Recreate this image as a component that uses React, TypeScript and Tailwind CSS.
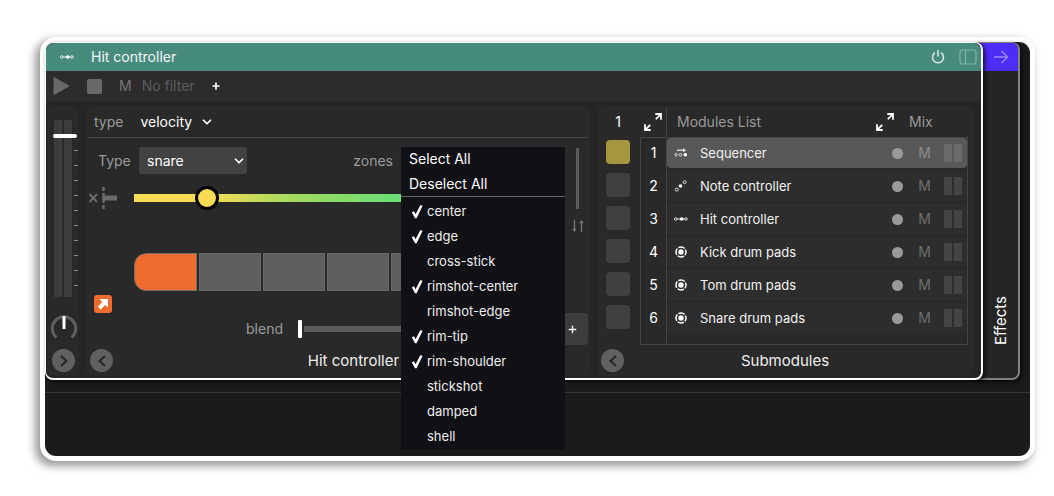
import { useState } from 'react';
import { ChevronDown, Plus } from 'lucide-react';

const ZONES = [
  'center',
  'edge',
  'cross-stick',
  'rimshot-center',
  'rimshot-edge',
  'rim-tip',
  'rim-shoulder',
  'stickshot',
  'damped',
  'shell',
];

const MODULES = [
  { name: 'Sequencer', icon: 'sequencer' },
  { name: 'Note controller', icon: 'note' },
  { name: 'Hit controller', icon: 'hit' },
  { name: 'Kick drum pads', icon: 'pads' },
  { name: 'Tom drum pads', icon: 'pads' },
  { name: 'Snare drum pads', icon: 'pads' },
];

function ModuleIcon({ kind }: { kind: string }) {
  return (
    <svg width="16" height="16" viewBox="0 0 16 16" fill="none" stroke="#fff" className="shrink-0">
      {kind === 'sequencer' && (
        <>
          <path d="M4 5.200h7" strokeWidth="1.1" />
          <path d="M10 3.200 13 5.200l-3 2z" fill="#fff" stroke="none" />
          <circle cx="3" cy="9.800" r="1.3" strokeWidth="0.7" />
          <circle cx="7.500" cy="9.800" r="1.3" strokeWidth="0.7" />
          <circle cx="12.300" cy="9.800" r="1.800" fill="#fff" stroke="none" />
        </>
      )}
      {kind === 'note' && (
        <>
          <circle cx="3.800" cy="11.600" r="1.500" strokeWidth="0.8" />
          <circle cx="7.500" cy="8" r="1.800" fill="#fff" stroke="none" />
          <circle cx="11.600" cy="4.200" r="1.500" strokeWidth="0.8" />
        </>
      )}
      {kind === 'hit' && (
        <>
          <path d="M4 8h7.500" strokeWidth="0.9" />
          <circle cx="2.700" cy="8" r="1.300" strokeWidth="0.8" />
          <circle cx="8.700" cy="8" r="1.800" fill="#fff" stroke="none" />
          <circle cx="12.900" cy="8" r="1.300" strokeWidth="0.8" />
        </>
      )}
      {kind === 'pads' && (
        <>
          <circle cx="8" cy="8" r="2.700" fill="#fff" stroke="none" />
          <circle cx="8" cy="8" r="5" strokeWidth="1.500" strokeDasharray="6.650 1.200" strokeDashoffset="3.300" />
        </>
      )}
    </svg>
  );
}

function ExpandIcon() {
  return (
    <svg width="18" height="18" viewBox="0 0 18 18" fill="none" stroke="#fff" strokeWidth="1.800">
      <path d="M11.300 1H17v5.700M16.600 1.400l-4.800 4.800" />
      <path d="M1 11.300V17h5.700M1.400 16.600l4.800-4.800" />
    </svg>
  );
}

function RoundButton({ label, flip }: { label: string; flip?: boolean }) {
  return (
    <button type="button" aria-label={label} className="flex size-[23px] items-center justify-center rounded-full bg-[#606060]">
      <svg width="12" height="14" viewBox="0 0 12 14" fill="none" stroke="#262626" strokeWidth="2">
        <path d={flip ? 'M3 2l5.500 5L3 12' : 'M9 2 3.500 7 9 12'} />
      </svg>
    </button>
  );
}

function ChannelStrip() {
  return (
    <section className="flex w-[31px] shrink-0 flex-col rounded-md bg-[#292929] pt-[14px]">
      <div className="relative flex h-[177px] gap-[2px] pl-[6px]">
        <div className="w-2 bg-[#3c3c3c]" />
        <div className="w-2 bg-[#3c3c3c]" />
        <div className="flex flex-col gap-[14px] pt-[30px]">
          {Array.from({ length: 10 }, (_, i) => (
            <div key={i} className="h-px w-1 bg-[#8a8a8a]" />
          ))}
        </div>
        <input
          type="range"
          aria-label="Volume"
          defaultValue={92}
          className="absolute inset-y-0 left-1 h-full w-[26px] appearance-none bg-transparent [direction:rtl] [writing-mode:vertical-lr] [&::-webkit-slider-thumb]:h-1 [&::-webkit-slider-thumb]:w-[24px] [&::-webkit-slider-thumb]:appearance-none [&::-webkit-slider-thumb]:rounded-full [&::-webkit-slider-thumb]:bg-white"
        />
      </div>
      <div className="flex flex-1 items-end justify-center">
        <svg width="28" height="28" viewBox="0 0 28 28" fill="none" className="mb-[2px]">
          <path d="M6.500 22.500A11.700 11.700 0 1 1 21.500 22.500" stroke="#606060" strokeWidth="3" />
          <path d="M14 1v13" stroke="#fff" strokeWidth="3" />
        </svg>
      </div>
      <div className="flex h-[31px] items-center justify-center">
        <RoundButton label="Expand strip" flip />
      </div>
    </section>
  );
}

function ZonesMenu() {
  const [checked, setChecked] = useState<string[]>(['center', 'edge', 'rimshot-center', 'rim-tip', 'rim-shoulder']);

  function toggle(zone: string) {
    setChecked((prev) => (prev.includes(zone) ? prev.filter((z) => z !== zone) : [...prev, zone]));
  }

  return (
    <div className="absolute top-0 left-0 z-20 w-full bg-[#111014] pb-px text-white">
      <div className="mb-[2px] flex h-[50px] flex-col border-b border-[#626264]">
        <button type="button" onClick={() => setChecked(ZONES)} className="h-[25px] px-2 text-left">
          Select All
        </button>
        <button type="button" onClick={() => setChecked([])} className="h-[25px] px-2 text-left">
          Deselect All
        </button>
      </div>
      {ZONES.map((zone) => (
        <label key={zone} className="flex h-[25px] items-center gap-1 pl-[10px] text-[13px] text-[#eeeeee]">
          <input type="checkbox" checked={checked.includes(zone)} onChange={() => toggle(zone)} className="peer sr-only" />
          <svg width="12" height="14" viewBox="0 0 12 14" className="invisible peer-checked:visible">
            <path d="M.8 7.300 3 6.200l1.600 3L9.300.2l2.300.6L5.600 13.200H4z" fill="#fff" />
          </svg>
          {zone}
        </label>
      ))}
    </div>
  );
}

function HitControllerCard() {
  return (
    <section className="flex min-w-0 flex-1 flex-col rounded-md bg-[#292929]">
      <div className="mx-[2px] flex h-8 items-center gap-[17px] border-b border-[#444444] pl-[6px]">
        <label htmlFor="source" className="text-[#9a9a9a]">type</label>
        <div className="relative flex items-center">
          <select id="source" className="appearance-none bg-transparent pr-[22px] text-white">
            <option>velocity</option>
          </select>
          <ChevronDown size={14} strokeWidth={3} className="pointer-events-none absolute right-0 text-white" />
        </div>
      </div>

      <div className="flex">
        <div className="flex min-w-0 flex-1 flex-col">
          <div className="mt-[9px] flex h-[27px] items-center gap-2 pl-3">
            <label htmlFor="drum" className="w-[33px] text-[#9a9a9a]">Type</label>
            <div className="relative flex w-[108px] items-center">
              <select id="drum" className="h-[27px] w-full appearance-none rounded-[3px] bg-[#424242] pl-2 text-white">
                <option>snare</option>
              </select>
              <ChevronDown size={14} strokeWidth={3} className="pointer-events-none absolute right-px text-white" />
            </div>
            <span className="ml-auto text-[#9a9a9a]">zones</span>
            <div className="relative h-full w-[164px] bg-[#424242]">
              <ZonesMenu />
            </div>
          </div>

          <div className="mt-3 flex h-6 items-center">
            <div className="w-12 shrink-0 pl-[2px]">
              <svg width="30" height="24" viewBox="0 0 30 24" fill="none" stroke="#6c6c6c">
                <path d="M1.500 8l7.500 8M9 8l-7.500 8" strokeWidth="2" />
                <path d="M15.500 1v4M15.500 7v10M15.500 19v4" strokeWidth="2.400" />
                <path d="M15.500 12H29" strokeWidth="5" />
              </svg>
            </div>
            <input
              type="range"
              aria-label="Threshold"
              max={1000}
              defaultValue={149}
              className="h-6 min-w-0 flex-1 appearance-none bg-transparent [&::-webkit-slider-runnable-track]:h-2 [&::-webkit-slider-runnable-track]:bg-[linear-gradient(90deg,#f8dc53_17%,#9edb5f_38%,#6cdd77_60%)] [&::-webkit-slider-thumb]:-mt-2 [&::-webkit-slider-thumb]:size-6 [&::-webkit-slider-thumb]:appearance-none [&::-webkit-slider-thumb]:rounded-full [&::-webkit-slider-thumb]:border-[3px] [&::-webkit-slider-thumb]:border-black [&::-webkit-slider-thumb]:bg-[#f8dc53]"
            />
          </div>

          <div className="mt-[43px] flex h-[60px] items-start">
            <div className="flex h-full w-12 shrink-0 items-end pl-2">
              <button type="button" aria-label="Output" className="flex size-[18px] items-center justify-center rounded-[3px] bg-[#ef6c2e]">
                <svg width="12" height="12" viewBox="0 0 12 12">
                  <path d="M2.500 1H11v8.500L8.300 6.900 3.600 11.500.8 8.700l4.600-4.600z" fill="#fff" />
                </svg>
              </button>
            </div>
            <div className="flex h-[38px] flex-1 gap-[2px] overflow-hidden rounded-xl">
              <div className="w-[63px] rounded-l-xl border border-[#74706e] bg-[#ef6c2e]" />
              {[1, 2, 3, 4].map((n) => (
                <div key={n} className="w-[62px] border border-[#6a6a6c] bg-[#5f5f61]" />
              ))}
              <div className="flex-1 border border-[#6a6a6c] bg-[#5f5f61]" />
            </div>
          </div>
        </div>

        <div className="flex w-[25px] flex-col items-center gap-[10px] pt-[10px]">
          <div className="h-[61px] w-[3px] bg-[#5a5a5a]" />
          <svg width="12" height="14" viewBox="0 0 12 14" fill="none" stroke="#777">
            <path d="M2.500 1v11" strokeWidth="1.300" />
            <path d="M9.500 13V2" strokeWidth="1.300" />
            <path d="M.3 9.800h4.400L2.500 13z" fill="#777" stroke="none" />
            <path d="M7.300 4.200h4.400L9.500 1z" fill="#777" stroke="none" />
          </svg>
        </div>
      </div>

      <div className="flex h-8 items-center gap-[15px] pr-[2px] pl-40">
        <label htmlFor="blend" className="text-[#9a9a9a]">blend</label>
        <input
          id="blend"
          type="range"
          defaultValue={0}
          className="h-[18px] min-w-0 flex-1 appearance-none bg-transparent [&::-webkit-slider-runnable-track]:h-[6px] [&::-webkit-slider-runnable-track]:bg-[#5c5c5c] [&::-webkit-slider-thumb]:-mt-[6px] [&::-webkit-slider-thumb]:h-[18px] [&::-webkit-slider-thumb]:w-1 [&::-webkit-slider-thumb]:appearance-none [&::-webkit-slider-thumb]:rounded-[1px] [&::-webkit-slider-thumb]:bg-white [&::-webkit-slider-thumb]:shadow-[2px_0_0_#292929]"
        />
        <button type="button" aria-label="Add" className="flex h-8 w-10 items-center justify-end rounded bg-[#3c3c3c] pr-[10px] text-white">
          <Plus size={11} strokeWidth={3} />
        </button>
      </div>

      <div className="grid h-[31px] grid-cols-[31px_1fr] items-center text-center text-[#eeeeee]">
        <div className="flex justify-center">
          <RoundButton label="Collapse hit controller" />
        </div>
        <h3 className="text-[15px]">Hit controller</h3>
      </div>
    </section>
  );
}

function SubmodulesCard() {
  const [selected, setSelected] = useState(0);

  return (
    <section className="flex w-[376px] shrink-0 flex-col rounded-md bg-[#292929]">
      <div className="flex gap-[10px] pr-[5px] pl-[9px]">
        <div className="flex w-6 flex-col gap-[9px]">
          <div className="flex h-[25px] items-center justify-center pt-[7px] text-white">1</div>
          {MODULES.map((_, i) => (
            <button
              key={i}
              type="button"
              aria-label={`Pad ${i + 1}`}
              className={i === 0 ? 'size-6 rounded bg-[#a6963f]' : 'size-6 rounded bg-[#404040]'}
            />
          ))}
        </div>

        <table className="flex-1 table-fixed border-separate border-spacing-0">
          <colgroup>
            <col className="w-[27px]" />
            <col />
            <col className="w-[15px]" />
            <col className="w-[39px]" />
            <col className="w-[24px]" />
          </colgroup>
          <thead>
            <tr className="h-8 text-left text-[#9a9a9a]">
              <th className="border-b border-[#444444] p-0">
                <button type="button" aria-label="Expand numbers" className="flex h-[27px] w-full items-center border-r border-[#444444] pl-1">
                  <ExpandIcon />
                </button>
              </th>
              <th colSpan={2} className="border-b border-[#444444] p-0 font-normal">
                <div className="flex items-center justify-between pr-[11px] pl-[10px]">
                  Modules List
                  <button type="button" aria-label="Expand list">
                    <ExpandIcon />
                  </button>
                </div>
              </th>
              <th colSpan={2} className="border-b border-[#444444] p-0 pl-1 font-normal">Mix</th>
            </tr>
          </thead>
          <tbody>
            {MODULES.map((m, i) => {
              const bg = i === selected ? 'bg-[#585858]' : 'bg-[#2d2d2d]';
              const last = i === MODULES.length - 1 ? 'h-[42px] border-b' : 'h-[33px]';
              return (
                <tr key={m.name} onClick={() => setSelected(i)} className="align-top">
                  <td className={`border-x border-[#444444] p-0 ${last}`}>
                    <div className="flex h-[30px] items-center justify-center text-white">{i + 1}</div>
                  </td>
                  <td className={`border-[#444444] p-0 ${last}`}>
                    <div className={`flex h-[30px] items-center gap-[11px] rounded-l-[4px] pl-[6px] text-[13px] text-[#f2f2f2] ${bg}`}>
                      <ModuleIcon kind={m.icon} />
                      {m.name}
                    </div>
                  </td>
                  <td className={`border-[#444444] p-0 ${last}`}>
                    <div className={`flex h-[30px] items-center justify-center ${bg}`}>
                      <span className="size-[11px] rounded-full bg-[#9a9a9a]" />
                    </div>
                  </td>
                  <td className={`border-[#444444] p-0 ${last}`}>
                    <div className={`flex h-[30px] items-center justify-center ${bg} ${i === selected ? 'text-[#8c8c8c]' : 'text-[#6e6e6e]'}`}>M</div>
                  </td>
                  <td className={`border-r border-[#444444] p-0 ${last}`}>
                    <div className={`flex h-[30px] items-center gap-[2px] rounded-r-[4px] ${bg}`}>
                      <span className={`h-[18px] w-2 ${i === selected ? 'bg-[#6a6a6a]' : 'bg-[#444444]'}`} />
                      <span className={`h-[18px] w-2 ${i === selected ? 'bg-[#6a6a6a]' : 'bg-[#444444]'}`} />
                    </div>
                  </td>
                </tr>
              );
            })}
          </tbody>
        </table>
      </div>

      <div className="grid h-[31px] grid-cols-[31px_1fr_31px] items-center text-center text-[#eeeeee]">
        <div className="flex justify-center">
          <RoundButton label="Collapse submodules" />
        </div>
        <h3 className="text-[15px]">Submodules</h3>
      </div>
    </section>
  );
}

export default function App() {
  return (
    <div className="bg-white pt-[37px] pr-[19px] pb-[35px] pl-10 font-['Inter',sans-serif] text-sm">
      <main className="rounded-2xl border-[5px] border-white bg-[#1b1b1b] shadow-[-4px_4px_9px_1px_rgba(0,0,0,0.4)]">
        <div className="flex pr-[10px]">
          <article className="relative z-10 min-w-0 flex-1 rounded-lg border-t border-r-2 border-b-2 border-l border-white bg-[#252525] shadow-[2px_2px_4px_rgba(0,0,0,0.7)]">
            <header className="flex h-7 items-center rounded-t-lg bg-[#478b7d] pr-1 pl-[13px] text-white">
              <ModuleIcon kind="hit" />
              <h2 className="ml-4 text-[#f2f7f5]">Hit controller</h2>
              <button type="button" aria-label="Power" className="ml-auto">
                <svg width="14" height="16" viewBox="0 0 14 16" fill="none" stroke="#d9e9e5" strokeWidth="1.500">
                  <path d="M7 1v6.500" />
                  <path d="M4 3.700a5.500 5.500 0 1 0 6 0" />
                </svg>
              </button>
              <button type="button" aria-label="Layout" className="ml-[14px]">
                <svg width="18" height="16" viewBox="0 0 18 16" fill="none" stroke="#85b3aa" strokeWidth="1.200">
                  <rect x="1" y="1" width="16" height="14" rx="2.500" />
                  <path d="M6.500 1v14" />
                </svg>
              </button>
            </header>

            <div className="flex h-[30px] items-center bg-[#2c2c2c] pl-[7px]">
              <button type="button" aria-label="Play">
                <svg width="17" height="20" viewBox="0 0 17 20">
                  <path d="M1 1.500 16 10 1 18.500z" fill="#696969" stroke="#696969" strokeLinejoin="round" />
                </svg>
              </button>
              <button type="button" aria-label="Stop" className="ml-[17px] size-[15px] rounded-[2px] bg-[#696969]" />
              <button type="button" className="ml-[17px] text-[#777777]">M</button>
              <span className="ml-[10px] text-[#5c5c5c]">No filter</span>
              <button type="button" aria-label="Add filter" className="ml-4 text-white">
                <Plus size={10} strokeWidth={4} />
              </button>
            </div>

            <div className="flex gap-[7px] pt-[5px] pr-2 pb-[2px] pl-[2px]">
              <ChannelStrip />
              <HitControllerCard />
              <SubmodulesCard />
            </div>
          </article>

          <aside className="-ml-2 flex w-[45px] flex-col rounded-r-lg border-t border-r-2 border-b-2 border-[#828282] bg-[#252525] shadow-[2px_2px_4px_rgba(0,0,0,0.7)]">
            <button type="button" aria-label="Open effects" className="flex h-7 items-center justify-center rounded-tr-md bg-[#4d2cf5] pl-2">
              <svg width="16" height="14" viewBox="0 0 16 14" fill="none" stroke="#9a86fa" strokeWidth="1.500">
                <path d="M1 7h13.500M8.500 1l6 6-6 6" />
              </svg>
            </button>
            <div className="flex flex-1 items-end justify-center pb-[33px] pl-2 text-[15px] text-white">
              <span className="rotate-180 [writing-mode:vertical-rl]">Effects</span>
            </div>
          </aside>
        </div>
        <div className="mt-3 h-16 border-t border-[#363636]" />
      </main>
    </div>
  );
}
